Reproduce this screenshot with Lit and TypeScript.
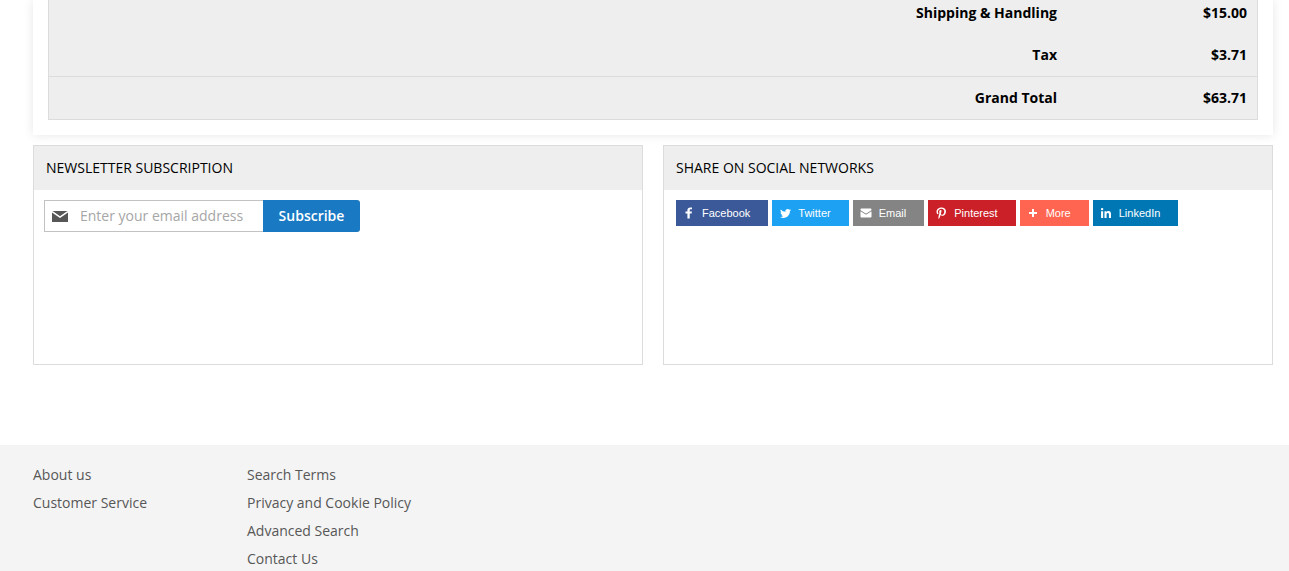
import { LitElement, html, css, svg } from "lit";
import { customElement } from "lit/decorators.js";
import { classMap } from "lit/directives/class-map.js";

const totals = [
  { label: "Shipping & Handling", amount: "$15.00" },
  { label: "Tax", amount: "$3.71" },
  { label: "Grand Total", amount: "$63.71", grand: true },
];

const networks = [
  {
    name: "Facebook",
    icon: svg`<path d="M22 5.16c-.406-.054-1.806-.16-3.43-.16-3.4 0-5.733 1.825-5.733 5.17v2.882H9v3.913h3.837V27h4.604V16.965h3.823l.587-3.913h-4.41v-2.5c0-1.123.347-1.903 2.198-1.903H22V5.16z"/>`,
  },
  {
    name: "Twitter",
    icon: svg`<path d="M27.996 10.116c-.81.36-1.68.602-2.592.71a4.526 4.526 0 0 0 1.984-2.496 9.037 9.037 0 0 1-2.866 1.095 4.513 4.513 0 0 0-7.69 4.116 12.81 12.81 0 0 1-9.3-4.715 4.49 4.49 0 0 0-.612 2.27 4.51 4.51 0 0 0 2.008 3.755 4.495 4.495 0 0 1-2.044-.564v.057a4.515 4.515 0 0 0 3.62 4.425 4.52 4.52 0 0 1-2.04.077 4.517 4.517 0 0 0 4.217 3.134 9.055 9.055 0 0 1-5.604 1.93A9.18 9.18 0 0 1 6 23.85a12.773 12.773 0 0 0 6.918 2.027c8.3 0 12.84-6.876 12.84-12.84 0-.195-.005-.39-.014-.583a9.172 9.172 0 0 0 2.252-2.336"/>`,
  },
  {
    name: "Email",
    icon: svg`<path d="M27 22.757c0 1.24-.988 2.243-2.19 2.243H7.19C5.98 25 5 23.994 5 22.757V13.67c0-.556.39-.773.855-.496l8.78 5.238c.782.467 1.95.467 2.73 0l8.78-5.238c.472-.28.855-.063.855.495v9.087z"/><path d="M27 9.243C27 8.006 26.02 7 24.81 7H7.19C5.988 7 5 8.004 5 9.243v.465c0 .554.385 1.232.857 1.514l9.61 5.733c.267.16.8.16 1.067 0l9.61-5.733c.473-.283.856-.96.856-1.514v-.465z"/>`,
  },
  {
    name: "Pinterest",
    icon: svg`<path d="M7 13.252c0 1.81.772 4.45 2.895 5.045.074.014.178.04.252.04.49 0 .772-1.27.772-1.63 0-.428-1.174-1.34-1.174-3.123 0-3.705 3.028-6.33 6.947-6.33 3.37 0 5.863 1.782 5.863 5.058 0 2.446-1.054 7.035-4.468 7.035-1.232 0-2.286-.83-2.286-2.018 0-1.742 1.307-3.43 1.307-5.225 0-1.092-.67-1.977-1.916-1.977-1.692 0-2.732 1.77-2.732 3.165 0 .774.104 1.63.476 2.336-.683 2.736-2.08 6.814-2.08 9.633 0 .87.135 1.728.224 2.6l.134.137.207-.07c2.494-3.178 2.405-3.8 3.533-7.96.61 1.077 2.182 1.658 3.43 1.658 5.254 0 7.614-4.77 7.614-9.067C26 7.987 21.755 5 17.094 5 12.017 5 7 8.15 7 13.252z"/>`,
  },
  { name: "More", icon: svg`<path d="M18 14V8h-4v6H8v4h6v6h4v-6h6v-4h-6z"/>` },
  {
    name: "LinkedIn",
    icon: svg`<path d="M26 25.963h-4.185v-6.55c0-1.56-.027-3.57-2.175-3.57-2.18 0-2.51 1.7-2.51 3.46v6.66h-4.182V12.495h4.012v1.84h.058c.558-1.058 1.924-2.174 3.96-2.174 4.24 0 5.022 2.79 5.022 6.417v7.386zM8.23 10.655a2.426 2.426 0 0 1 0-4.855 2.427 2.427 0 0 1 0 4.855zm-2.098 1.84h4.19v13.468h-4.19V12.495z"/>`,
  },
];

const footerLinks = [
  ["About us", "Customer Service"],
  ["Search Terms", "Privacy and Cookie Policy", "Advanced Search", "Contact Us"],
];

@customElement("app-root")
export class AppRoot extends LitElement {
  static styles = css`
    :host {
      display: block;
      font: 14px/20px "Open Sans", "Noto Sans", sans-serif;
      color: #000;
      background: #fff;
    }
    * {
      box-sizing: border-box;
    }
    .content {
      padding: 0 16px 80px 33px;
    }
    .order {
      padding: 0 15px 15px;
      background: #fff;
      box-shadow: 0 0 10px rgba(0, 0, 0, 0.1);
    }
    .totals {
      width: 100%;
      border-collapse: separate;
      border-spacing: 0;
      border: 1px solid #dcdcdc;
      border-top: 0;
      background: #eee;
      font-weight: 700;
      text-align: right;
    }
    .totals th,
    .totals td {
      padding: 11px 10px;
    }
    .totals tr:first-child > * {
      padding-top: 3px;
    }
    .totals td {
      width: 190px;
    }
    .totals .grand > * {
      border-top: 1px solid #dcdcdc;
    }
    .panels {
      display: grid;
      grid-template-columns: 1fr 1fr;
      gap: 20px;
      margin-top: 10px;
    }
    .panel {
      min-height: 220px;
      border: 1px solid #dcdcdc;
      background: #fff;
    }
    .title {
      margin: 0;
      padding: 12px;
      background: #eee;
      font-size: 14px;
      font-weight: 400;
      text-transform: uppercase;
    }
    .subscribe {
      display: flex;
      padding: 10px;
    }
    .field {
      display: flex;
      align-items: center;
      gap: 12px;
      width: 219px;
      height: 32px;
      padding-left: 7px;
      border: 1px solid #c2c2c2;
      border-right: 0;
    }
    .envelope {
      flex: none;
      width: 16px;
      height: 11px;
    }
    .email {
      flex: 1;
      min-width: 0;
      padding: 0;
      border: 0;
      outline: 0;
      background: none;
      font: inherit;
    }
    .email::placeholder {
      color: #a6a6a6;
      opacity: 1;
    }
    .submit {
      min-width: 97px;
      height: 32px;
      padding: 0 15px;
      border: 0;
      border-radius: 0 3px 3px 0;
      background: #1979c3;
      color: #fff;
      font: inherit;
      font-weight: 600;
      cursor: pointer;
    }
    .share {
      display: flex;
      flex-wrap: wrap;
      gap: 4px;
      padding: 10px 12px;
    }
    .network {
      display: flex;
      align-items: center;
      gap: 5px;
      height: 26px;
      padding: 0 18px 0 5px;
      border: 0;
      color: #fff;
      font: 11px/16px "Liberation Sans", Arial, sans-serif;
      cursor: pointer;
    }
    .glyph {
      width: 16px;
      height: 16px;
      fill: #fff;
    }
    .facebook {
      background: #3b5998;
    }
    .twitter {
      background: #1da1f2;
    }
    .mail {
      background: #848484;
    }
    .pinterest {
      background: #cb2027;
    }
    .more {
      background: #ff6550;
    }
    .linkedin {
      background: #0077b5;
    }
    .footer {
      display: flex;
      padding: 20px 16px 2px 33px;
      background: #f4f4f4;
    }
    .links {
      display: flex;
      flex-direction: column;
      gap: 8px;
      min-width: 214px;
      margin: 0;
      padding: 0;
      list-style: none;
    }
    .link {
      color: #575757;
      text-decoration: none;
    }
    .link:hover {
      text-decoration: underline;
    }
  `;

  render() {
    return html`
      <main class="content">
        <section class="order">
          <table class="totals">
            <tbody>
              ${totals.map(
                (row) => html`<tr class=${classMap({ grand: !!row.grand })}>
                  <th scope="row">${row.label}</th>
                  <td>${row.amount}</td>
                </tr>`
              )}
            </tbody>
          </table>
        </section>
        <div class="panels">
          <section class="panel">
            <h2 class="title">Newsletter Subscription</h2>
            <form class="subscribe" @submit=${(e: Event) => e.preventDefault()}>
              <label class="field">
                <svg class="envelope" viewBox="0 0 16 11" aria-hidden="true">
                  <rect width="16" height="11" fill="#575757" />
                  <path d="M0 0.5 8 6 16 0.5" fill="none" stroke="#fff" stroke-width="1.5" />
                </svg>
                <input
                  class="email"
                  type="email"
                  aria-label="Email address"
                  placeholder="Enter your email address"
                />
              </label>
              <button class="submit" type="submit">Subscribe</button>
            </form>
          </section>
          <section class="panel">
            <h2 class="title">Share on Social Networks</h2>
            <div class="share">
              ${networks.map(
                (n) => html`<button
                  type="button"
                  class="network ${n.name === "Email" ? "mail" : n.name.toLowerCase()}"
                >
                  <svg class="glyph" viewBox="0 0 32 32" aria-hidden="true">${n.icon}</svg>
                  <span>${n.name}</span>
                </button>`
              )}
            </div>
          </section>
        </div>
      </main>
      <footer class="footer">
        ${footerLinks.map(
          (column) => html`<ul class="links">
            ${column.map((text) => html`<li><a class="link" href="#">${text}</a></li>`)}
          </ul>`
        )}
      </footer>
    `;
  }
}
